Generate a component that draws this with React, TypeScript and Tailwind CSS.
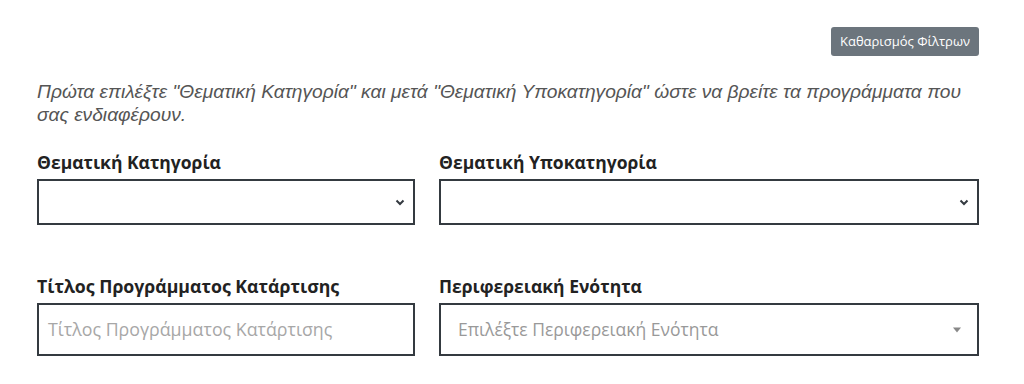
import React from "react";

function Chevron() {
  return (
    <svg width="10" height="8" viewBox="0 0 10 8" className="absolute right-[8px] top-1/2 -translate-y-1/2">
      <path d="M1.5 2.5 L5 6 L8.5 2.5" fill="none" stroke="#343a40" strokeWidth="2" />
    </svg>
  );
}

export default function App() {
  return (
    <div className="w-[1024px] h-[384px] bg-white overflow-hidden" style={{ fontFamily: '"Open Sans", sans-serif' }}>
      <div className="pl-[37px] pr-[45px] pt-[27px]">
        <div className="flex justify-end">
          <button className="h-[29px] px-[9px] rounded-[3px] bg-[#6c757d] text-white text-[13px] leading-none">
            Καθαρισμός Φίλτρων
          </button>
        </div>
        <p
          className="mt-[24px] text-[19.2px] leading-[23px] italic text-[#555] pr-[4px]"
          style={{ fontFamily: '"Liberation Sans", Arial, sans-serif' }}
        >
          Πρώτα επιλέξτε "Θεματική Κατηγορία" και μετά "Θεματική Υποκατηγορία" ώστε να βρείτε τα προγράμματα που σας ενδιαφέρουν.
        </p>
        <div className="grid grid-cols-[378px_540px] gap-x-[24px] mt-[25px]">
          <div>
            <div className="text-[17.5px] font-bold text-[#222] leading-[22px] mb-[6px]">Θεματική Κατηγορία</div>
            <div className="relative h-[46px] border-2 border-[#343a40] bg-white">
              <Chevron />
            </div>
          </div>
          <div>
            <div className="text-[17.5px] font-bold text-[#222] leading-[22px] mb-[6px]">Θεματική Υποκατηγορία</div>
            <div className="relative h-[46px] border-2 border-[#343a40] bg-white">
              <Chevron />
            </div>
          </div>
          <div className="mt-[50px]">
            <div className="text-[17.7px] font-bold text-[#222] leading-[22px] mb-[6px]">Τίτλος Προγράμματος Κατάρτισης</div>
            <div className="h-[53px] border-2 border-[#343a40] bg-white flex items-center pl-[9px] text-[17.8px] text-[#a7a7a7]">
              Τίτλος Προγράμματος Κατάρτισης
            </div>
          </div>
          <div className="mt-[50px]">
            <div className="text-[17.5px] font-bold text-[#222] leading-[22px] mb-[6px]">Περιφερειακή Ενότητα</div>
            <div className="relative h-[53px] border-2 border-[#343a40] bg-white flex items-center pl-[17px] text-[17.5px] text-[#999]">
              Επιλέξτε Περιφερειακή Ενότητα
              <span className="absolute right-[16px] top-1/2 -translate-y-1/2 w-0 h-0 border-l-[4px] border-r-[4px] border-t-[5px] border-l-transparent border-r-transparent border-t-[#888]" />
            </div>
          </div>
        </div>
      </div>
    </div>
  );
}
